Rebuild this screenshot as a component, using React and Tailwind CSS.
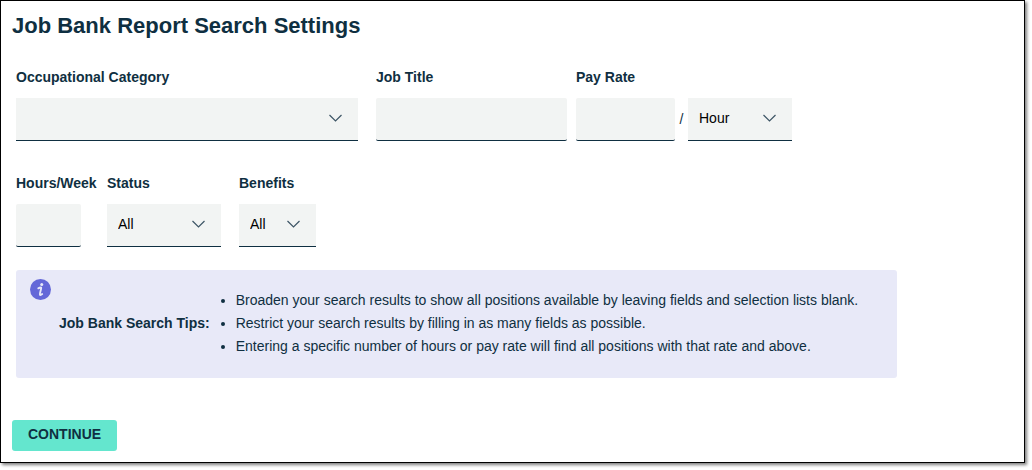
const fieldBase =
  'h-[43px] w-full border-b border-[#0f2f41] bg-[#f2f4f3] px-[11px] text-sm text-black outline-none focus:border-b-2';

function TextField({ id, label }) {
  return <input id={id} type="text" aria-label={label} className={`${fieldBase} rounded-xs`} />;
}

function SelectField({ id, label, options }) {
  return (
    <div className="relative">
      <select id={id} aria-label={label} className={`${fieldBase} appearance-none rounded-none pb-0.5`}>
        {options.map((option) => (
          <option key={option}>{option}</option>
        ))}
      </select>
      <svg
        className="pointer-events-none absolute top-4 right-4 h-2 w-[13px]"
        viewBox="0 0 13 8"
        fill="none"
        stroke="#3d5565"
        strokeWidth="1.2"
        aria-hidden="true"
      >
        <path d="M0.5 1 6.5 7 12.5 1" />
      </svg>
    </div>
  );
}

function Field({ id, label, className, children }) {
  return (
    <div className={`flex flex-col gap-[11px] ${className}`}>
      <label htmlFor={id} className="text-sm leading-5 font-bold whitespace-nowrap">
        {label}
      </label>
      {children}
    </div>
  );
}

const tips = [
  'Broaden your search results to show all positions available by leaving fields and selection lists blank.',
  'Restrict your search results by filling in as many fields as possible.',
  'Entering a specific number of hours or pay rate will find all positions with that rate and above.',
];

function InfoIcon() {
  return (
    <svg className="size-[21px] shrink-0" viewBox="0 0 20 20" aria-hidden="true">
      <circle cx="10" cy="10" r="10" fill="#6468d8" />
      <circle cx="11.2" cy="5.2" r="1.45" fill="#e8e9f8" />
      <path
        d="M7.9 8.9C8.9 8.3 10.1 7.9 10.7 8.2C11.2 8.5 9 14.1 9.4 14.9C9.8 15.5 10.8 15 11.6 14.3"
        fill="none"
        stroke="#e8e9f8"
        strokeWidth="1.8"
        strokeLinecap="round"
        strokeLinejoin="round"
      />
    </svg>
  );
}

export default function App() {
  return (
    <div className="bg-white pr-[7px] pb-[7px] font-['Liberation_Sans',Arial,sans-serif] text-[#0f2f41]">
      <main className="border border-black px-[11px] pt-[9px] pb-[11px] shadow-[2px_2px_3px_rgba(0,0,0,0.5)]">
        <h1 className="text-[22px] leading-8 font-bold">Job Bank Report Search Settings</h1>

        <form onSubmit={(event) => event.preventDefault()}>
          <div className="flex flex-col px-1 pt-[25px]">
            <div className="flex flex-wrap items-end">
              <Field id="category" label="Occupational Category" className="mr-[18px] w-[342px]">
                <SelectField id="category" label="Occupational Category" options={['']} />
              </Field>
              <Field id="title" label="Job Title" className="mr-[9px] w-[191px]">
                <TextField id="title" label="Job Title" />
              </Field>
              <Field id="rate" label="Pay Rate" className="w-[99px]">
                <TextField id="rate" label="Pay Rate" />
              </Field>
              <span className="w-[13px] pb-3 text-center text-sm">/</span>
              <div className="w-[104px]">
                <SelectField id="period" label="Pay period" options={['Hour', 'Week', 'Month', 'Year']} />
              </div>
            </div>

            <div className="flex flex-wrap pt-8">
              <Field id="hours" label="Hours/Week" className="mr-[26px] w-[65px]">
                <TextField id="hours" label="Hours/Week" />
              </Field>
              <Field id="status" label="Status" className="mr-[18px] w-[114px]">
                <SelectField id="status" label="Status" options={['All', 'Full-time', 'Part-time']} />
              </Field>
              <Field id="benefits" label="Benefits" className="w-[77px]">
                <SelectField id="benefits" label="Benefits" options={['All', 'Yes', 'No']} />
              </Field>
            </div>

            <section className="mt-[23px] flex w-full max-w-[881px] gap-2 rounded-[3px] bg-[#e8e9f8] px-[14px] py-[9px]">
              <InfoIcon />
              <div className="flex items-center pt-2.5 pb-[11px]">
                <h2 className="pb-0.5 text-sm font-bold whitespace-nowrap">Job Bank Search Tips:</h2>
                <ul className="list-disc pl-[26px] text-sm leading-[23px]">
                  {tips.map((tip) => (
                    <li key={tip}>{tip}</li>
                  ))}
                </ul>
              </div>
            </section>
          </div>

          <button
            type="submit"
            className="mt-[42px] h-[31px] rounded-[3px] bg-[#64e6ce] px-4 pb-1 text-sm font-bold"
          >
            CONTINUE
          </button>
        </form>
      </main>
    </div>
  );
}
